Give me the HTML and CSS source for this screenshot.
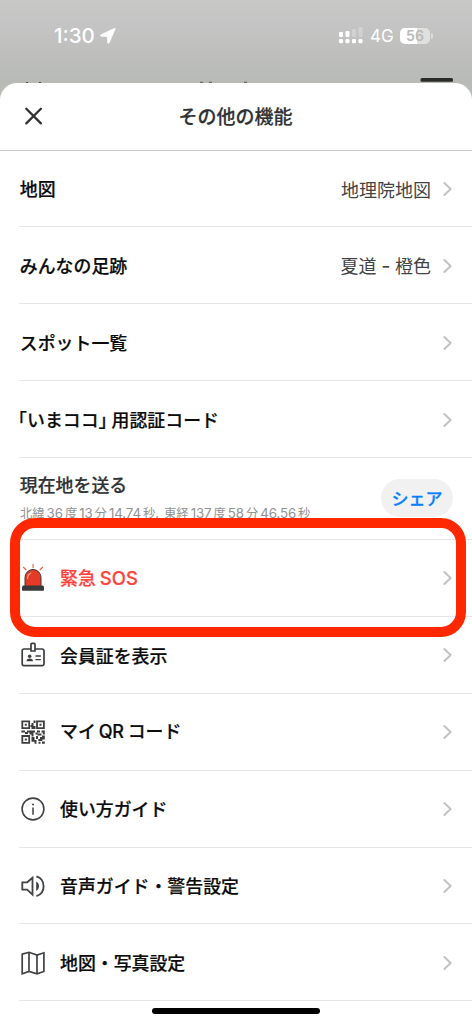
FILE: index.html
```html
<!DOCTYPE html>
<html lang="ja">
<head>
<meta charset="utf-8">
<title>その他の機能</title>
<link rel="stylesheet" href="styles.css">
</head>
<body>
<svg width="0" height="0" class="defs"><symbol id="chev" viewBox="0 0 10 16"><path d="M1.4 2l6.2 6-6.2 6" fill="none" stroke="#c2c2c2" stroke-width="2" stroke-linecap="round" stroke-linejoin="round"/></symbol></svg>
<div class="screen">
  <header class="status">
    <div class="clock">1:30<svg width="16" height="16" viewBox="0 0 16 16"><path d="M15.300.7 9.300 14.800c-.4.9-1.700.7-1.700-.3L7.400 8.600 1.200 8.400C.1 8.300 0 7.100.9 6.700L14.500.3c.6-.2 1-.1.8.4z" fill="#fff" stroke="#fff" stroke-width=".6"/></svg></div>
    <div class="signals">
      <svg class="bars" width="24" height="17" viewBox="0 0 24 17" fill="#fff"><rect y="5" width="4" height="5" rx="1.3"/><rect x="6.5" y="4" width="4" height="6" rx="1.3"/><rect x="13" y="2" width="4" height="8" rx="1.3" opacity=".25"/><rect x="19.5" y="0" width="4" height="10" rx="1.3" opacity=".25"/><rect y="12" width="4" height="4.3" rx="1.3"/><rect x="6.5" y="12" width="4" height="4.3" rx="1.3"/><rect x="13" y="12" width="4" height="4.3" rx="1.3"/><rect x="19.5" y="12" width="4" height="4.3" rx="1.3"/></svg>
      <span class="net">4G</span>
      <span class="battery">56</span><span class="cap"></span>
    </div>
    <svg class="behind" width="472" height="6" viewBox="0 0 472 6"><rect x="420.5" y="1" width="32.5" height="3.8" rx="1.5" fill="#2a2c28"/><path d="M26 5.500h2M39 5.500h2M200 5.300h3M209 5.300h3M244 5.300h3" stroke="#555853"/></svg>
  </header>
  <main class="sheet">
    <div class="head">
      <svg class="close" width="20" height="20" viewBox="0 0 20 20"><path d="M2.300 2.800l14.600 14.600M16.900 2.800L2.300 17.400" stroke="#303234" stroke-width="2.300" stroke-linecap="round"/></svg>
      <h1>その他の機能</h1>
    </div>
    <ul class="list">
      <li class="row first"><span class="label">地図</span><span class="value">地理院地図</span><svg class="chev"><use href="#chev"/></svg></li>
      <li class="row"><span class="label">みんなの足跡</span><span class="value">夏道<i class="dash">-</i>橙色</span><svg class="chev"><use href="#chev"/></svg></li>
      <li class="row"><span class="label">スポット一覧</span><svg class="chev"><use href="#chev"/></svg></li>
      <li class="row"><span class="label quoted"><span class="half">「</span>いまココ<span class="half close-q">」</span>用認証コード</span><svg class="chev"><use href="#chev"/></svg></li>
      <li class="row share">
        <div class="place"><span class="label dark">現在地を送る</span><span class="coords">北緯<b>36</b>度<b>13</b>分<b>14.74</b>秒<b class="comma">,</b>東経<b>137</b>度<b>58</b>分<b>46.56</b>秒</span></div>
        <button class="pill">シェア</button>
      </li>
      <li class="row sos">
        <svg class="icon" width="26" height="30" viewBox="0 0 26 30"><path d="M13.100 1v4M3.200 4l3 3M22.800 4l-3 3" stroke="#f0573f" stroke-width="1.100"/><path d="M5 23.500V14.500a8 8 0 0 1 16 0v9z" fill="#e53b26" stroke="#3b3938" stroke-width="1"/><path d="M7.600 16c-.2-3.500 1.400-5.300 3.600-6" fill="none" stroke="#f6a092" stroke-width="1.300"/><path d="M2 27v-2.400C2 23 3 22.500 4 22.500h18c1 0 2 .5 2 2.100V27c0 .5-.3.8-.8.8H2.800C2.300 27.800 2 27.500 2 27z" fill="#393939"/></svg>
        <span class="label">緊急<i class="latin">SOS</i></span><svg class="chev"><use href="#chev"/></svg>
      </li>
      <li class="row">
        <svg class="icon" width="26" height="26" viewBox="0 0 26 26" fill="none" stroke="#3b3d3f" stroke-width="1.700"><path d="M11 7H4a1.800 1.800 0 0 0-1.800 1.800v13A1.800 1.800 0 0 0 4 23.600h18.200a1.800 1.800 0 0 0 1.800-1.800v-13A1.800 1.800 0 0 0 22.200 7h-7"/><path d="M11 9V2.500c0-.7.4-1.100 1-1.100h2c.7 0 1 .4 1 1.100V9z"/><circle cx="9.700" cy="14.300" r="1.800" fill="#3b3d3f" stroke="none"/><path d="M6.500 19.300c0-2.200 1.400-2.800 3.200-2.800s3.300.6 3.300 2.800z" fill="#3b3d3f" stroke="none"/><path d="M15.500 14h5.300M15.500 17.600h5.300" stroke-width="1.300"/></svg>
        <span class="label">会員証を表示</span><svg class="chev"><use href="#chev"/></svg>
      </li>
      <li class="row">
        <svg class="icon" width="26" height="26" viewBox="0 0 26 26"><g fill="none" stroke="#3e3e3e" stroke-width="1.800"><path d="M2.300 2.300h6.900v6.900H2.300zM17 2.300h6.900v6.900H17zM2.300 17h6.900v6.900H2.300z"/></g><path fill="#3e3e3e" d="M4.800 4.800h2v2h-2zM19.500 4.800h2v2h-2zM4.800 19.500h2v2h-2zM13.500 1.400h2v2.600h-2zM11.500 4h2v3h2v3h-4V8h-1V6h1zM1.400 11.500H5v2H1.400zM5 13h3v2H5zM7 11.500h8v2h-1.500v4h-2v-2h-2v-2H7zM17 11.500h3v2h-3zM21.500 11.500h3.300v4h-2v-2h-1.300zM15.500 13.500h2v2h-2zM17.500 14.500h4v2h-4zM11.500 18h3v3h2v3.800h-2v-2h-3zM16 17h2v3h2v-2h2v-1.500h2.800v4h-2.500v1.500h-4v-2H16zM18.500 22.800h2v2h-2zM22 22.500h2.800v2.300H22z"/></svg>
        <span class="label">マイ<i class="latin qr">QR</i><span class="after">コード</span></span><svg class="chev"><use href="#chev"/></svg>
      </li>
      <li class="row">
        <svg class="icon" width="26" height="26" viewBox="0 0 26 26"><circle cx="13" cy="13" r="10.900" fill="none" stroke="#404244" stroke-width="1.600"/><path d="M13 11.400v7.300" stroke="#404244" stroke-width="1.500"/><circle cx="13" cy="8.400" r="1" fill="#404244"/></svg>
        <span class="label">使い方ガイド</span><svg class="chev"><use href="#chev"/></svg>
      </li>
      <li class="row">
        <svg class="icon" width="26" height="26" viewBox="0 0 26 26" fill="none" stroke="#404244" stroke-width="1.800"><path d="M2.300 9.300h4.900l5.300-4.500v16.800l-5.300-4.900H2.300z"/><path d="M16.200 8.500c2 1.200 2.800 2.800 2.800 4.700s-.8 3.500-2.800 4.700z" fill="#404244" stroke="none"/><path d="M16.400 3.300c4.600 1.400 7.200 5.200 7.200 9.900s-2.600 8.500-7.200 9.900"/></svg>
        <span class="label">音声ガイド・警告設定</span><svg class="chev"><use href="#chev"/></svg>
      </li>
      <li class="row">
        <svg class="icon" width="26" height="26" viewBox="0 0 26 26" fill="none" stroke="#404244" stroke-width="1.700"><path d="M2.200 4.100 9 2.300l8 2.700 6.900-2.200v18.700L17 23.800l-8-2.300-6.800 2.300zM9 2.300v19.200M17 5v18.800"/></svg>
        <span class="label">地図・写真設定</span><svg class="chev"><use href="#chev"/></svg>
      </li>
    </ul>
    <div class="home"></div>
  </main>
  <div class="highlight"></div>
</div>
</body>
</html>
```

FILE: styles.css
```css
* { box-sizing: border-box; }
body { margin: 0; font-family: "Noto Sans CJK JP", sans-serif; }
.defs { position: absolute; }
.screen { position: relative; width: 472px; height: 1024px; overflow: hidden; background: linear-gradient(#c8c8c7 0, #c4c4c4 24px, #b8bab6 83px, #bbbdb9 110px); }
.status { position: relative; height: 83px; display: flex; justify-content: space-between; padding: 24px 39px 0 54px; color: #fff; font-family: Inter, sans-serif; }
.clock { display: flex; align-items: center; gap: 5px; height: 23px; font-size: 20.500px; font-weight: 500; }
.signals { display: flex; align-items: center; height: 23px; }
.net { margin: 0 0 0 7px; font-size: 17px; font-weight: 400; width: 24px; }
.battery { width: 30px; height: 16px; margin-left: 6px; border-radius: 5px; background: linear-gradient(90deg, #fff 56%, #e0e0df 56%); color: #b9bab8; font-size: 14px; font-weight: 600; line-height: 16px; text-align: center; }
.cap { width: 2px; height: 6px; margin-left: 1px; border-radius: 0 3px 3px 0; background: #dcdddb; }
.behind { position: absolute; left: 0; bottom: 0; }
.sheet { position: relative; height: 941px; background: #fff; border-radius: 17px 17px 0 0; }
.head { display: flex; align-items: center; height: 68px; padding: 0 24px 1px; border-bottom: 1px solid #cacaca; }
.close { display: block; }
h1 { flex: 1; margin: 0 21px 0 0; text-align: center; font-size: 19px; line-height: 28px; font-weight: 500; color: #303234; -webkit-text-stroke: .2px; }
.list { list-style: none; margin: 0; padding: 0 0 0 19px; }
.row { display: flex; align-items: center; height: 76.900px; padding: 1px 19px 0 1px; border-bottom: 1px solid #e6e6e6; }
.row.first { height: 76.300px; }
.label { font-size: 17.900px; line-height: 26px; font-weight: 500; color: #0c0c0c; white-space: nowrap; margin: -1.500px 0 0 -.2px; -webkit-text-stroke: .2px; }
.dark { color: #303234; }
.value { margin: -1px 12px 0 auto; font-size: 18px; line-height: 26px; color: #414345; white-space: nowrap; }
.chev { width: 10px; height: 16px; flex: none; margin-left: auto; }
.value + .chev { margin-left: 0; }
.dash { display: inline-block; width: 18.500px; text-align: center; font: 400 20px/20px Inter, sans-serif; }
.half { display: inline-block; width: 9px; font-feature-settings: "halt"; }
.quoted { margin-left: -2px; }
.close-q { margin-right: 4px; }
.latin { font-family: Inter, sans-serif; font-style: normal; font-size: 18.500px; font-weight: 500; margin-left: 4px; }
.qr { font-size: 18px; margin-left: 3px; letter-spacing: -.3px; }
.after { margin-left: 4px; }
.icon { flex: none; margin: 0 14.200px 0 0; }
.row.share { height: 82px; }
.place { display: flex; flex-direction: column; gap: 5px; margin-top: -1px; }
.coords { font-size: 12.300px; line-height: 22px; color: #929292; white-space: nowrap; }
.coords b { font-family: Inter, sans-serif; font-weight: 400; font-size: 13.300px; margin: 0 2px; letter-spacing: -.1px; }
.coords b.comma { margin: 0 5px 0 0; }
.pill { width: 72px; height: 38px; margin: -1px 0 0 auto; border: 0; border-radius: 19px; background: #f1f1f1; color: #0880ff; font: 500 17px/38px "Noto Sans CJK JP", sans-serif; padding: 0; -webkit-text-stroke: .3px; }
.sos .label { color: #ff443d; }
.home { width: 168px; height: 6px; margin: 7px auto 0; border-radius: 3px; background: #000; }
.highlight { position: absolute; left: 9.500px; top: 518px; width: 456.500px; height: 118.500px; border: 10px solid #ff2800; border-radius: 25px; }
```
